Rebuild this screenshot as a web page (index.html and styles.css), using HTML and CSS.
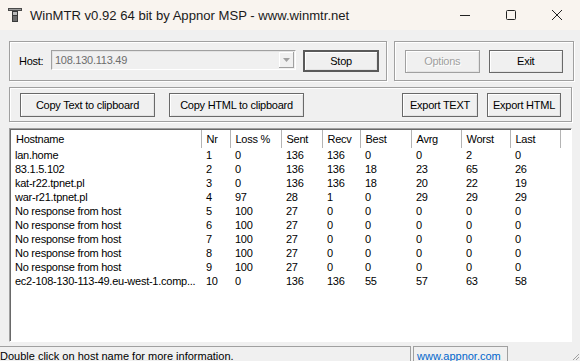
FILE: index.html
```html
<!DOCTYPE html>
<html lang="en">
<head>
    <meta charset="UTF-8">
    <title>WinMTR</title>
    <link rel="stylesheet" href="styles.css">
</head>
<body>
    <div class="window">
        <header class="titlebar">
            <svg class="app-icon" width="14" height="14" viewBox="0 0 14 14">
                <rect x="0" y="0" width="14" height="3" fill="#4a4a4a"/>
                <rect x="1" y="1" width="12" height="1" fill="#9a9a9a"/>
                <rect x="4" y="3" width="6" height="11" fill="#3a3a3a"/>
                <rect x="5" y="4" width="4" height="3" fill="#bdbdbd"/>
                <rect x="5" y="8" width="4" height="5" fill="#6d6d6d"/>
            </svg>
            <span class="title">WinMTR v0.92 64 bit by Appnor MSP - www.winmtr.net</span>
            <div class="controls">
                <svg width="46" height="30" viewBox="0 0 46 30"><path d="M18 15.5h10" stroke="#222" stroke-width="1"/></svg>
                <svg width="46" height="30" viewBox="0 0 46 30"><rect x="18.5" y="10.5" width="9" height="9" rx="1" fill="none" stroke="#222"/></svg>
                <svg width="46" height="30" viewBox="0 0 46 30"><path d="M18 10l10 10M28 10l-10 10" stroke="#222" stroke-width="1"/></svg>
            </div>
        </header>

        <main class="client">
            <div class="row">
                <div class="group host-group">
                    <span class="label">Host:</span>
                    <div class="combo">
                        <span class="combo-text">108.130.113.49</span>
                        <span class="combo-arrow">
                            <svg width="7" height="4" viewBox="0 0 7 4"><path d="M0 0h7L3.5 4z" fill="#a0a0a0"/></svg>
                        </span>
                    </div>
                    <button class="btn default stop">Stop</button>
                </div>
                <div class="group opt-group">
                    <button class="btn small disabled">Options</button>
                    <button class="btn small">Exit</button>
                </div>
            </div>

            <div class="group copy-group">
                <button class="btn wide">Copy Text to clipboard</button>
                <button class="btn wide">Copy HTML to clipboard</button>
                <span class="spacer"></span>
                <button class="btn small">Export TEXT</button>
                <button class="btn small">Export HTML</button>
            </div>

            <div class="list">
                <table class="report">
                    <thead>
                        <tr>
                            <th class="c-host">Hostname</th>
                            <th class="c-nr">Nr</th>
                            <th class="c-loss">Loss %</th>
                            <th class="c-sent">Sent</th>
                            <th class="c-recv">Recv</th>
                            <th class="c-best">Best</th>
                            <th class="c-avrg">Avrg</th>
                            <th class="c-worst">Worst</th>
                            <th class="c-last">Last</th>
                            <th class="c-fill"></th>
                        </tr>
                    </thead>
                    <tbody>
                        <tr><td>lan.home</td><td>1</td><td>0</td><td>136</td><td>136</td><td>0</td><td>0</td><td>2</td><td>0</td><td></td></tr>
                        <tr><td>83.1.5.102</td><td>2</td><td>0</td><td>136</td><td>136</td><td>18</td><td>23</td><td>65</td><td>26</td><td></td></tr>
                        <tr><td>kat-r22.tpnet.pl</td><td>3</td><td>0</td><td>136</td><td>136</td><td>18</td><td>20</td><td>22</td><td>19</td><td></td></tr>
                        <tr><td>war-r21.tpnet.pl</td><td>4</td><td>97</td><td>28</td><td>1</td><td>0</td><td>29</td><td>29</td><td>29</td><td></td></tr>
                        <tr><td>No response from host</td><td>5</td><td>100</td><td>27</td><td>0</td><td>0</td><td>0</td><td>0</td><td>0</td><td></td></tr>
                        <tr><td>No response from host</td><td>6</td><td>100</td><td>27</td><td>0</td><td>0</td><td>0</td><td>0</td><td>0</td><td></td></tr>
                        <tr><td>No response from host</td><td>7</td><td>100</td><td>27</td><td>0</td><td>0</td><td>0</td><td>0</td><td>0</td><td></td></tr>
                        <tr><td>No response from host</td><td>8</td><td>100</td><td>27</td><td>0</td><td>0</td><td>0</td><td>0</td><td>0</td><td></td></tr>
                        <tr><td>No response from host</td><td>9</td><td>100</td><td>27</td><td>0</td><td>0</td><td>0</td><td>0</td><td>0</td><td></td></tr>
                        <tr><td>ec2-108-130-113-49.eu-west-1.comp...</td><td>10</td><td>0</td><td>136</td><td>136</td><td>55</td><td>57</td><td>63</td><td>58</td><td></td></tr>
                    </tbody>
                </table>
            </div>
        </main>

        <footer class="statusbar">
            <div class="pane main-pane">Double click on host name for more information.</div>
            <div class="pane link-pane">www.appnor.com</div>
            <svg class="grip" width="10" height="10" viewBox="0 0 10 10">
                <path d="M9 3L3 9M9 6L6 9" stroke="#a0a0a0" stroke-width="1"/>
            </svg>
        </footer>
    </div>
</body>
</html>
```

FILE: styles.css
```css
body {
    margin: 0;
    width: 580px;
    height: 361px;
    overflow: hidden;
    background-color: #f0f0f0;
    font-family: "Liberation Sans", Arial, sans-serif;
    color: #000;
}
.window {
    display: flex;
    flex-direction: column;
    height: 361px;
}
.titlebar {
    height: 30px;
    display: flex;
    align-items: center;
    background-color: #f9f4ef;
    flex-shrink: 0;
}
.app-icon {
    margin-left: 8px;
    margin-right: 8px;
}
.title {
    font-size: 13.1px;
    color: #1a1a1a;
    flex: 1;
    padding-top: 1px;
}
.controls {
    display: flex;
}
.controls svg {
    display: block;
}
.client {
    padding: 11px 8px 0 9px;
    flex: 1;
    display: flex;
    flex-direction: column;
}
.row {
    display: flex;
    gap: 7px;
}
.group {
    border: 1px solid #a0a0a0;
    box-shadow: inset 1px 1px #fff, 1px 1px #fff;
    display: flex;
    align-items: center;
    box-sizing: border-box;
    font-size: 11px;
    letter-spacing: -0.25px;
}
.host-group {
    width: 378px;
    height: 40px;
    padding: 0 7px 0 9px;
}
.label {
    width: 32px;
}
.combo {
    width: 246px;
    height: 20px;
    box-sizing: border-box;
    border-top: 1px solid #a0a0a0;
    border-left: 1px solid #a0a0a0;
    border-bottom: 1px solid #fff;
    border-right: 1px solid #fff;
    box-shadow: inset 1px 1px #e3e3e3;
    display: flex;
    align-items: center;
    margin-top: -2px;
}
.combo-text {
    flex: 1;
    color: #6d6d6d;
    padding-left: 3px;
}
.combo-arrow {
    width: 15px;
    height: 16px;
    margin-right: 1px;
    border-right: 1px solid #a0a0a0;
    border-bottom: 1px solid #a0a0a0;
    box-shadow: inset 1px 1px #fff;
    display: flex;
    align-items: center;
    justify-content: center;
    box-sizing: border-box;
}
.btn {
    font-family: inherit;
    font-size: 11px;
    letter-spacing: -0.25px;
    color: #000;
    background-color: #f0f0f0;
    border: 1px solid #696969;
    box-shadow: inset 1px 1px #fff, inset -1px -1px #e3e3e3;
    padding: 0;
    height: 23px;
    box-sizing: border-box;
}
.btn.default {
    border: 2px solid #5a5a5a;
}
.stop {
    width: 76px;
    margin-left: 7px;
    height: 22px;
}
.opt-group {
    width: 180px;
    height: 40px;
    padding: 0 10px 0 10px;
    gap: 9px;
}
.btn.small {
    width: 76px;
}
.btn.disabled {
    border-color: #a0a0a0;
    color: #a0a0a0;
    text-shadow: 1px 1px #fff;
}
.copy-group {
    margin-top: 6px;
    height: 35px;
    padding: 0 10px 0 10px;
    gap: 14px;
}
.btn.wide {
    width: 135px;
    height: 24px;
}
.copy-group .btn.small {
    height: 24px;
}
.copy-group .btn.small + .btn.small {
    margin-left: -5px;
    width: 74px;
}
.spacer {
    flex: 1;
}
.list {
    margin-top: 6px;
    height: 214px;
    box-sizing: border-box;
    background-color: #fff;
    border-top: 1px solid #a0a0a0;
    border-left: 1px solid #a0a0a0;
    border-bottom: 1px solid #fff;
    border-right: 1px solid #fff;
    box-shadow: inset 1px 1px #696969;
    padding: 1px 0 0 1px;
    overflow: hidden;
}
.report {
    border-collapse: collapse;
    font-size: 11px;
    letter-spacing: -0.25px;
    table-layout: fixed;
    width: 561px;
}
.report th {
    font-weight: normal;
    text-align: left;
    height: 18px;
    padding: 0 0 0 5px;
    border-right: 1px solid #b4b4b4;
    box-sizing: border-box;
}
.report td {
    height: 14px;
    padding: 0 0 0 5px;
    line-height: 14px;
    white-space: nowrap;
    overflow: hidden;
}
.report td:first-child {
    padding-left: 4px;
}
.c-host { width: 190px; }
.c-nr { width: 29px; }
.c-loss { width: 51px; }
.c-sent { width: 41px; }
.c-recv { width: 38px; }
.c-best { width: 51px; }
.c-avrg { width: 50px; }
.c-worst { width: 49px; }
.c-last { width: 50px; }
.c-fill { width: 12px; }
.statusbar {
    height: 15px;
    margin-top: 4px;
    display: flex;
    font-size: 11px;
    position: relative;
}
.pane {
    border-top: 1px solid #a0a0a0;
    box-sizing: border-box;
    height: 15px;
    line-height: 18px;
    white-space: nowrap;
    overflow: hidden;
}
.main-pane {
    width: 411px;
    border-right: 1px solid #a0a0a0;
}
.link-pane {
    width: 95px;
    margin-left: 2px;
    border-left: 1px solid #a0a0a0;
    border-right: 1px solid #a0a0a0;
    padding-left: 3px;
    color: #0066cc;
    font-size: 11px;
}
.grip {
    position: absolute;
    right: 0;
    bottom: 0;
}
```
